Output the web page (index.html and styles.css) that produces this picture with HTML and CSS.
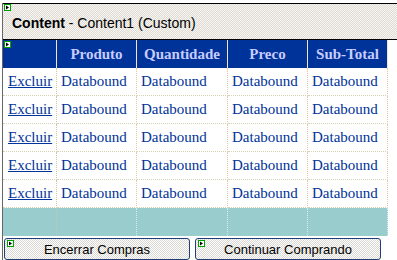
FILE: index.html
```html
<!DOCTYPE html>
<html lang="pt">
<head>
    <meta charset="UTF-8">
    <title>Content - Content1</title>
    <link rel="stylesheet" href="styles.css">
</head>
<body>
    <div class="region">
        <div class="region-head">
            <span class="tag"><svg width="7" height="7" viewBox="0 0 7 7"><rect x="0.5" y="0.5" width="6" height="6" fill="#fff" stroke="#00a000"/><path d="M2 1.5 L5 3.5 L2 5.5 Z" fill="#000"/></svg></span>
            <b>Content</b> - Content1 (Custom)
        </div>
        <div class="region-body">
            <span class="tag tag-grid"><svg width="7" height="7" viewBox="0 0 7 7"><rect x="0.5" y="0.5" width="6" height="6" fill="#fff" stroke="#00a000"/><path d="M2 1.5 L5 3.5 L2 5.5 Z" fill="#000"/></svg></span>
            <table class="cart">
                <colgroup>
                    <col class="c-del"><col class="c-prod"><col class="c-qty"><col class="c-price"><col class="c-sub">
                </colgroup>
                <thead>
                    <tr><th></th><th>Produto</th><th>Quantidade</th><th>Preco</th><th>Sub-Total</th></tr>
                </thead>
                <tbody>
                    <tr><td><a href="#">Excluir</a></td><td>Databound</td><td>Databound</td><td>Databound</td><td>Databound</td></tr>
                    <tr><td><a href="#">Excluir</a></td><td>Databound</td><td>Databound</td><td>Databound</td><td>Databound</td></tr>
                    <tr><td><a href="#">Excluir</a></td><td>Databound</td><td>Databound</td><td>Databound</td><td>Databound</td></tr>
                    <tr><td><a href="#">Excluir</a></td><td>Databound</td><td>Databound</td><td>Databound</td><td>Databound</td></tr>
                    <tr><td><a href="#">Excluir</a></td><td>Databound</td><td>Databound</td><td>Databound</td><td>Databound</td></tr>
                </tbody>
                <tfoot>
                    <tr><td></td><td></td><td></td><td></td><td></td></tr>
                </tfoot>
            </table>
            <div class="actions">
                <button type="button" class="btn btn-end"><span class="tag tag-btn"><svg width="7" height="7" viewBox="0 0 7 7"><rect x="0.5" y="0.5" width="6" height="6" fill="#fff" stroke="#00a000"/><path d="M2 1.5 L5 3.5 L2 5.5 Z" fill="#000"/></svg></span>Encerrar Compras</button>
                <button type="button" class="btn btn-go"><span class="tag tag-btn"><svg width="7" height="7" viewBox="0 0 7 7"><rect x="0.5" y="0.5" width="6" height="6" fill="#fff" stroke="#00a000"/><path d="M2 1.5 L5 3.5 L2 5.5 Z" fill="#000"/></svg></span>Continuar Comprando</button>
            </div>
        </div>
    </div>
</body>
</html>
```

FILE: styles.css
```css
body { margin: 0; background: #fff; overflow: hidden; }

.region { margin: 3px 0 0 2px; border-left: 1px solid #666; }
.region-head {
    position: relative; height: 24px; padding: 11px 0 0 9px;
    border-top: 1px solid #000; border-bottom: 1px solid #000;
    background: repeating-conic-gradient(#fbf6ea 0 25%, #dcdadc 0 50%) 0 0 / 2px 2px;
    font-family: "Liberation Sans", Arial, sans-serif; font-size: 14px; line-height: 16px; color: #000;
}
.region-body { position: relative; }

.tag { position: absolute; left: 1px; top: 0; width: 7px; height: 7px; line-height: 0; }
.tag-grid { top: 1px; }
.tag-btn { left: 2px; top: 1px; }

.cart {
    border-collapse: separate; border-spacing: 0; table-layout: fixed; width: 385px;
    font-family: "Liberation Serif", "Times New Roman", serif; font-size: 15px;
}
.c-del { width: 54px; }
.c-prod { width: 80px; }
.c-qty { width: 91px; }
.c-price { width: 80px; }
.c-sub { width: 80px; }

.cart th, .cart td {
    box-sizing: border-box; height: 28px; padding: 0 0 0 4px; white-space: nowrap; overflow: hidden;
    border-right: 1px dotted #e9c9a4;
}
.cart th {
    background: #003399; color: #c8ccff; font-weight: bold; text-align: center; padding: 0;
    border-right: 1px solid #efe6d6;
}
.cart td { color: #003399; text-align: left; border-bottom: 1px dotted #d6d2b0; }
.cart td:first-child { padding-left: 5px; border-right-color: #c9c6ac; }
.cart td a { color: #003399; }
.cart tfoot td { background: #99cccc; border-bottom: none; border-right-color: #d8eeee; }

.actions { display: flex; gap: 5px; padding: 2px 0 0 1px; }
.btn {
    position: relative; width: 186px; height: 22px; padding: 0; margin: 0;
    border: 1px solid #1f3f78; border-radius: 3px;
    background: repeating-conic-gradient(#ffffff 0 25%, #d9d7d2 0 50%) 0 0 / 2px 2px;
    font-family: "Liberation Sans", Arial, sans-serif; font-size: 13px; color: #000;
}
```
